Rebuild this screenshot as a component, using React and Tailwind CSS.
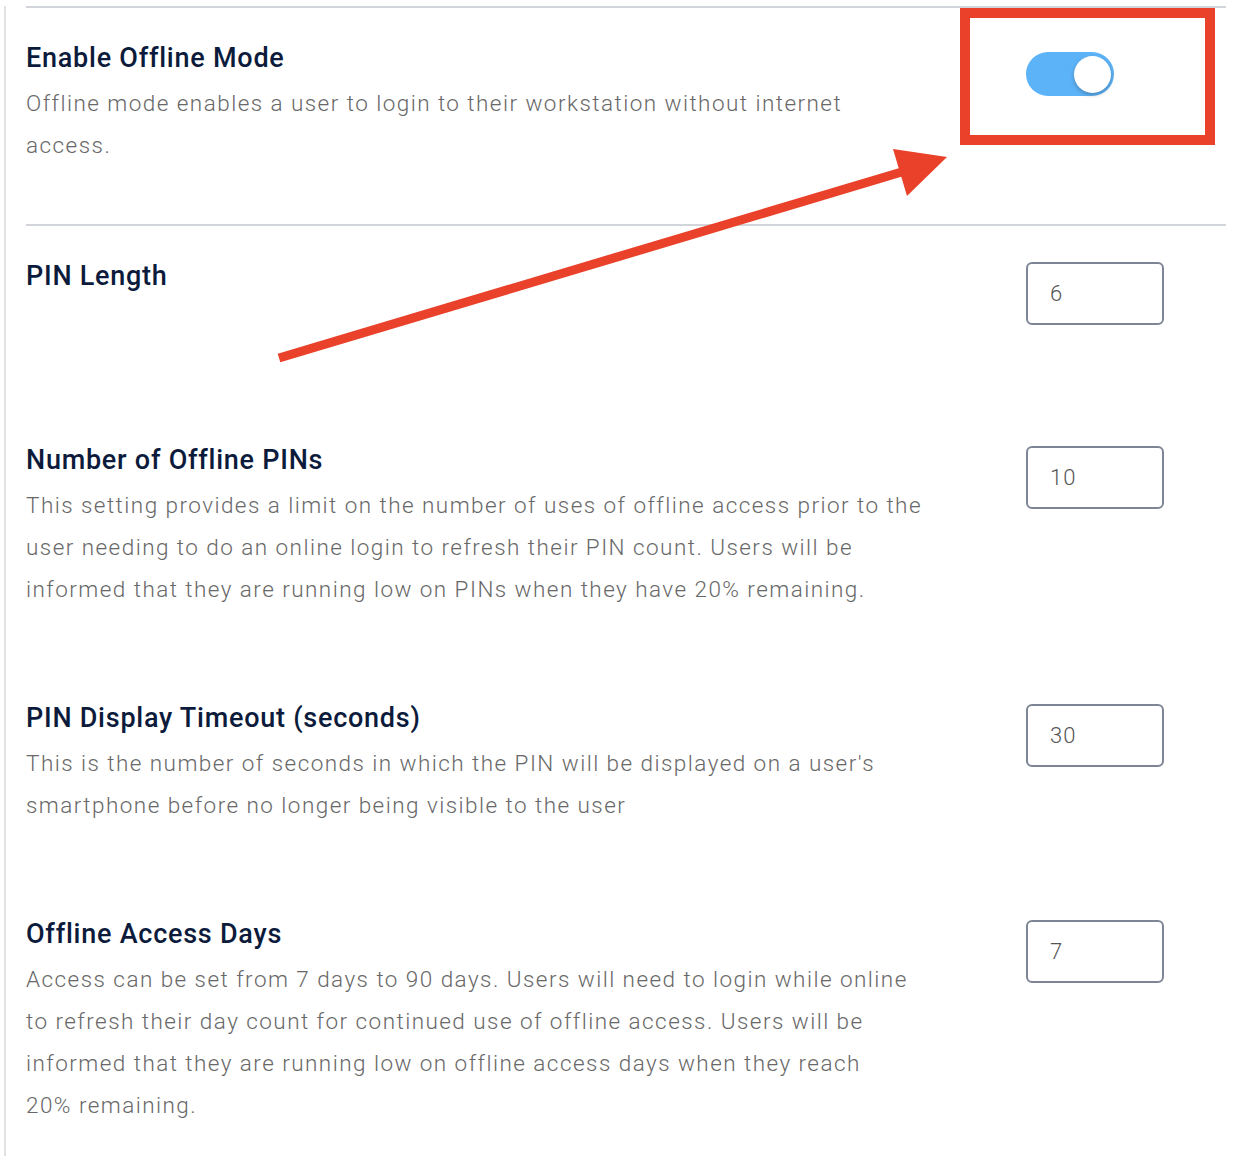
const rows = [
  {
    title: 'PIN Length',
    value: '6',
    lines: [],
    gap: 'pt-[30px]',
    bottom: 'pb-[115px]',
  },
  {
    title: 'Number of Offline PINs',
    value: '10',
    lines: [
      'This setting provides a limit on the number of uses of offline access prior to the',
      'user needing to do an online login to refresh their PIN count. Users will be',
      'informed that they are running low on PINs when they have 20% remaining.',
    ],
    gap: '',
    bottom: 'pb-[88px]',
  },
  {
    title: 'PIN Display Timeout (seconds)',
    value: '30',
    lines: [
      "This is the number of seconds in which the PIN will be displayed on a user's",
      'smartphone before no longer being visible to the user',
    ],
    gap: '',
    bottom: 'pb-[88px]',
  },
  {
    title: 'Offline Access Days',
    value: '7',
    lines: [
      'Access can be set from 7 days to 90 days. Users will need to login while online',
      'to refresh their day count for continued use of offline access. Users will be',
      'informed that they are running low on offline access days when they reach',
      '20% remaining.',
    ],
    gap: '',
    bottom: 'pb-[30px]',
  },
]

function Title({ children }) {
  return <h3 className="h-[40px] whitespace-nowrap text-[27px] leading-[40px] font-medium tracking-[0.75px] text-[#0c1b3b]">{children}</h3>
}

function Description({ lines }) {
  if (!lines.length) return null
  return (
    <div className="mt-[4px] text-[22.5px] leading-[42px] font-light tracking-[1.45px] text-[#686868]">
      {lines.map((line) => <p key={line} className="whitespace-nowrap">{line}</p>)}
    </div>
  )
}

function Toggle() {
  return (
    <div className="mt-[14px] flex h-[44px] w-[88px] items-center justify-end rounded-full bg-[#5db3f7] pr-[3px]">
      <span className="h-[37px] w-[37px] rounded-full bg-white shadow-[0_2px_4px_rgba(0,0,0,0.25)]" />
    </div>
  )
}

function NumberField({ value }) {
  return (
    <div className="mt-[6px] flex h-[63px] w-[138px] items-center rounded-[6px] border-2 border-[#7e8696] pl-[22px] text-[22px] font-light tracking-[1px] text-[#555]">
      {value}
    </div>
  )
}

function Annotation() {
  return (
    <svg className="pointer-events-none absolute top-0 left-0" width="1252" height="1156" viewBox="0 0 1252 1156">
      <rect x="965" y="13" width="245" height="127" fill="none" stroke="#e9412a" strokeWidth="10" />
      <line x1="279" y1="358" x2="905" y2="171" stroke="#e9412a" strokeWidth="9" />
      <polygon points="893,149 947,157 907,196" fill="#e9412a" />
    </svg>
  )
}

export default function App() {
  return (
    <div className="relative h-[1156px] overflow-hidden bg-white font-['Roboto',sans-serif]">
      <div className="ml-[4px] h-full border-l-2 border-[#e2e2e2] pr-[26px] pl-[20px]">
        <section className="mt-[6px] flex justify-between border-y-2 border-[#d2d5da] pt-[30px] pb-[58px]">
          <div>
            <Title>Enable Offline Mode</Title>
            <Description lines={['Offline mode enables a user to login to their workstation without internet', 'access.']} />
          </div>
          <div className="w-[200px]">
            <Toggle />
          </div>
        </section>

        {rows.map((row) => (
          <section key={row.title} className={`flex justify-between ${row.gap} ${row.bottom}`}>
            <div>
              <Title>{row.title}</Title>
              <Description lines={row.lines} />
            </div>
            <div className="w-[200px]">
              <NumberField value={row.value} />
            </div>
          </section>
        ))}
      </div>
      <Annotation />
    </div>
  )
}
